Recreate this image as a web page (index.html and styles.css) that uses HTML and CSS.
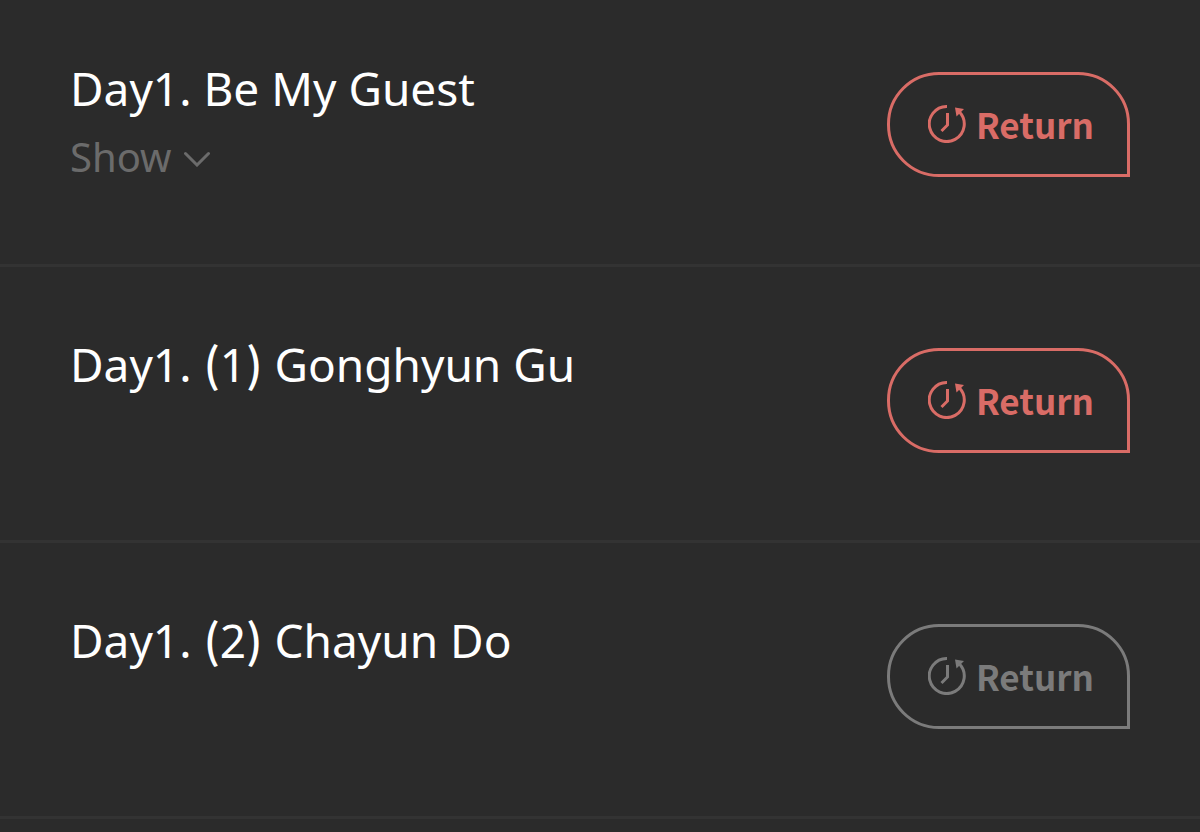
FILE: index.html
```html
<!DOCTYPE html>
<html lang="en">
<head>
    <meta charset="UTF-8">
    <meta name="viewport" content="width=device-width, initial-scale=1.0">
    <title>Episodes</title>
    <link rel="stylesheet" href="styles.css">
</head>
<body>
    <svg class="sprite" aria-hidden="true">
        <symbol id="icon-return" viewBox="0 0 38 38">
            <path d="M19 1.500A17.500 17.500 0 1 0 31.500 7"/>
            <path d="M19.500 8V20L13.500 26"/>
            <path class="arrow" d="M27 2.500L36 4L28.500 11.500Z"/>
        </symbol>
    </svg>

    <ul class="episode-list">
        <li class="episode">
            <div class="episode-info">
                <h2>Day1. Be My Guest</h2>
                <button type="button" class="show-btn">Show
                    <svg class="chevron" viewBox="0 0 26 16" aria-hidden="true"><path d="M1.500 2.500L13 14L24.500 2.500"/></svg>
                </button>
            </div>
            <button type="button" class="return-btn"><svg class="icon" aria-hidden="true"><use href="#icon-return"/></svg>Return</button>
        </li>
        <li class="episode">
            <div class="episode-info">
                <h2>Day1. <span class="paren">(</span>1<span class="paren">)</span> Gonghyun Gu</h2>
            </div>
            <button type="button" class="return-btn"><svg class="icon" aria-hidden="true"><use href="#icon-return"/></svg>Return</button>
        </li>
        <li class="episode">
            <div class="episode-info">
                <h2>Day1. <span class="paren">(</span>2<span class="paren">)</span> Chayun Do</h2>
            </div>
            <button type="button" class="return-btn" disabled><svg class="icon" aria-hidden="true"><use href="#icon-return"/></svg>Return</button>
        </li>
    </ul>
</body>
</html>
```

FILE: styles.css
```css
* {
    margin: 0;
    padding: 0;
    box-sizing: border-box;
}

body {
    font-family: 'Noto Sans', sans-serif;
    background: #2b2b2b;
    color: #fff;
}

.sprite {
    display: none;
}

.episode-list {
    list-style: none;
}

.episode {
    display: flex;
    justify-content: space-between;
    align-items: flex-start;
    padding: 81px 70px 87px;
    border-bottom: 3px solid #333;
}

.episode:first-child {
    padding: 72px 70px 80px;
}

h2 {
    font-size: 46px;
    font-weight: 400;
    line-height: 32px;
}

.paren {
    font-family: 'Noto Sans CJK KR', sans-serif;
    font-weight: 500;
    line-height: 0;
}

.show-btn {
    display: flex;
    align-items: center;
    gap: 12px;
    margin-top: 26px;
    background: none;
    border: none;
    color: #6b6b6b;
    font: 40px/54px 'Noto Sans', sans-serif;
    cursor: pointer;
}

.chevron {
    width: 26px;
    height: 16px;
    margin-top: 4px;
    fill: none;
    stroke: currentColor;
    stroke-width: 3;
    stroke-linecap: round;
}

.return-btn {
    display: flex;
    align-items: center;
    gap: 10px;
    height: 105px;
    padding: 0 33px 2px 38px;
    background: none;
    border: 3px solid currentColor;
    border-radius: 52px 52px 0 52px;
    color: #d96c66;
    font: 700 35px/50px 'Noto Sans CJK KR', sans-serif;
    cursor: pointer;
}

.return-btn:disabled {
    color: #7b7b7b;
    cursor: default;
}

.icon {
    width: 38px;
    height: 38px;
    fill: none;
    stroke: currentColor;
    stroke-width: 3;
}

.arrow {
    fill: currentColor;
    stroke: none;
}
```
